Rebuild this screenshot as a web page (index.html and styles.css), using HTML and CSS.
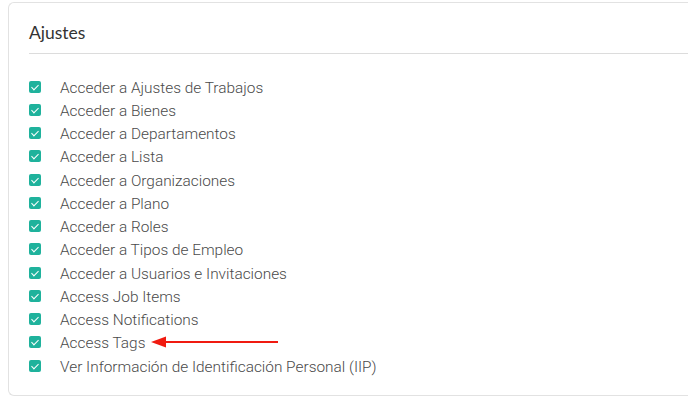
FILE: index.html
```html
<!DOCTYPE html>
<html lang="es">
<head>
    <meta charset="UTF-8">
    <title>Ajustes</title>
    <link rel="stylesheet" href="styles.css">
</head>
<body>
    <section class="card">
        <h2 class="card-title">Ajustes</h2>
        <ul class="perm-list">
            <li><span class="check"></span>Acceder a Ajustes de Trabajos</li>
            <li><span class="check"></span>Acceder a Bienes</li>
            <li><span class="check"></span>Acceder a Departamentos</li>
            <li><span class="check"></span>Acceder a Lista</li>
            <li><span class="check"></span>Acceder a Organizaciones</li>
            <li><span class="check"></span>Acceder a Plano</li>
            <li><span class="check"></span>Acceder a Roles</li>
            <li><span class="check"></span>Acceder a Tipos de Empleo</li>
            <li><span class="check"></span>Acceder a Usuarios e Invitaciones</li>
            <li><span class="check"></span>Access Job Items</li>
            <li><span class="check"></span>Access Notifications</li>
            <li><span class="check"></span>Access Tags
                <svg class="arrow" width="130" height="12" viewBox="0 0 130 12">
                    <path d="M14 6 H127" stroke="#f01a10" stroke-width="2"/>
                    <path d="M0 6 L15 0.5 L15 11.5 Z" fill="#f01a10"/>
                </svg>
            </li>
            <li><span class="check"></span>Ver Información de Identificación Personal (IIP)</li>
        </ul>
    </section>
</body>
</html>
```

FILE: styles.css
```css
/* Page */
body {
    margin: 0;
    background: #ffffff;
    overflow: hidden;
}
.card {
    box-sizing: border-box;
    height: 394px;
    margin: 2px 0 0 8px;
    padding: 0 0 0 20px;
    border: 1px solid #e2e2e2;
    border-right: none;
    border-radius: 6px 0 0 6px;
}

/* Header */
.card-title {
    margin: 0;
    padding: 21px 0 11px;
    font-family: 'Lato', sans-serif;
    font-size: 17.5px;
    font-weight: 400;
    line-height: 18px;
    color: #333;
    border-bottom: 1px solid #dcdcdc;
}

/* Permissions */
.perm-list {
    list-style: none;
    margin: 22px 0 0;
    padding: 0;
    font-family: 'Roboto', sans-serif;
    font-size: 15.4px;
    font-weight: 300;
    color: #4a4a4a;
}
.perm-list li {
    display: flex;
    align-items: center;
    height: 23.25px;
}
.check {
    position: relative;
    flex: none;
    width: 12px;
    height: 12px;
    margin-right: 19px;
    margin-top: -2px;
    border-radius: 2px;
    background: #1fb29c;
}
.check::after {
    content: "";
    position: absolute;
    left: 4px;
    top: 2px;
    width: 3px;
    height: 6px;
    border: solid #fff;
    border-width: 0 1.5px 1.5px 0;
    transform: rotate(45deg);
}
.arrow {
    margin-left: 6px;
    margin-top: -2px;
}
```
